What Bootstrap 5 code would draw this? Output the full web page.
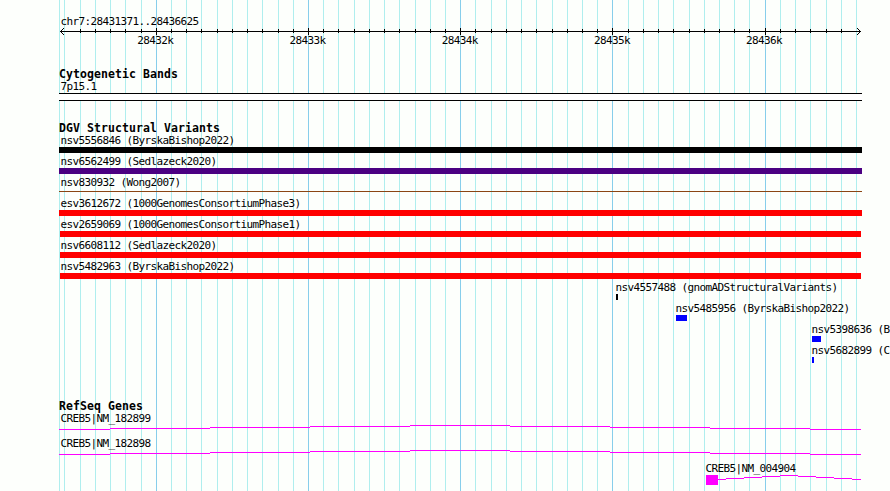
<!DOCTYPE html>
<html lang="en">
<head>
  <meta charset="UTF-8">
  <meta name="viewport" content="width=device-width, initial-scale=1.0">
  <title>chr7:28431371..28436625</title>
  <link href="https://cdn.jsdelivr.net/npm/bootstrap@5.3.2/dist/css/bootstrap.min.css" rel="stylesheet">
  <style>
    body {
      background-color: #fdfffc;
      color: #000;
      font-family: "DejaVu Sans Mono", "Liberation Mono", monospace;
      font-size: 11px;
      letter-spacing: -0.622px;
      line-height: 13px;
    }
    .browser-panel {
      width: 890px;
      height: 491px;
    }
    .grid-lines {
      z-index: -1;
    }
    .panel-title {
      font-size: 11.5px;
      font-weight: bold;
      letter-spacing: 0.077px;
      line-height: 12px;
      margin: 0;
      padding-left: 59px;
    }
    .region-name {
      padding: 15px 0 0 60.4px;
    }
    .ruler {
      height: 8px;
      margin-top: -1px;
    }
    /* each 1000 bp step is 152.24px wide */
    .ruler-labels {
      gap: 116.2px;
      height: 13px;
      margin-top: -1px;
      padding-left: 137.3px;
    }
    .cyto-panel {
      padding-top: 21px;
    }
    .cyto-band {
      background-color: #fff;
      border: solid #000;
      border-width: 1px 0;
      height: 8px;
      margin: 0 28px 0 59px;
    }
    .dgv-panel {
      padding-top: 21px;
    }
    .variant {
      height: 21px;
      padding-left: 60px;
    }
    .variant span {
      padding-left: 0.4px;
    }
    .variant-bar {
      flex: none;
      height: 6px;
      width: 801px;
    }
    .wide-bar {
      margin-left: -1px;
      width: 803px;
    }
    .bar-black { background-color: #000; }
    .bar-indigo { background-color: #4b0082; }
    .bar-red { background-color: #f00; }
    .bar-blue { background-color: #00f; }
    .bar-brown {
      background-color: #8b4513;
      height: 1px;
      margin-top: 2px;
    }
    .small-variant {
      padding-left: 0;
    }
    .small-variant .variant-bar {
      margin-left: 1px;
    }
    .refseq-panel {
      padding-top: 35px;
    }
    .gene {
      height: 25px;
    }
    .gene-name {
      padding-left: 60.4px;
    }
    .gene-name-right {
      padding-left: 705.4px;
    }
    .gene svg {
      flex: none;
      margin-top: -1px;
    }
  </style>
</head>
<body>
  <main class="browser-panel position-relative overflow-hidden text-nowrap">
    <svg class="grid-lines position-absolute top-0 start-0" id="gridLines" width="890" height="491" shape-rendering="crispEdges"></svg>

    <header>
      <div class="region-name">chr7:28431371..28436625</div>
      <svg class="ruler d-block" id="ruler" width="890" height="8" viewBox="0 27 890 8" shape-rendering="crispEdges">
        <path d="M60 31.5H861" stroke="#000"/>
        <path d="M60 31h1v1h-1zM61 30h1v1h-1zM62 29h1v1h-1zM63 28h1v1h-1zM61 32h1v1h-1zM62 33h1v1h-1zM63 34h1v1h-1z"/>
        <path d="M860 31h1v1h-1zM859 30h1v1h-1zM858 29h1v1h-1zM857 28h1v1h-1zM859 32h1v1h-1zM858 33h1v1h-1zM857 34h1v1h-1z"/>
      </svg>
      <div class="ruler-labels d-flex">
        <span>28432k</span>
        <span>28433k</span>
        <span>28434k</span>
        <span>28435k</span>
        <span>28436k</span>
      </div>
    </header>

    <section class="cyto-panel">
      <h2 class="panel-title">Cytogenetic Bands</h2>
      <div class="gene-name">7p15.1</div>
      <div class="cyto-band"></div>
    </section>

    <section class="dgv-panel">
      <h2 class="panel-title">DGV Structural Variants</h2>
      <div id="variants"></div>
    </section>

    <section class="refseq-panel">
      <h2 class="panel-title">RefSeq Genes</h2>
      <div class="gene d-flex flex-column">
        <span class="gene-name">CREB5|NM_182899</span>
        <svg width="890" height="13" viewBox="0 424 890 13" shape-rendering="crispEdges" fill="none" stroke="#f0f">
          <path d="M59 429.5h51m0-1h100m0-1h100m0-1h100m0-1h100m0 1h100m0 1h100m0 1h100m0 1h51"/>
        </svg>
      </div>
      <div class="gene d-flex flex-column">
        <span class="gene-name">CREB5|NM_182898</span>
        <svg width="890" height="13" viewBox="0 424 890 13" shape-rendering="crispEdges" fill="none" stroke="#f0f">
          <path d="M59 429.5h51m0-1h100m0-1h100m0-1h100m0-1h100m0 1h100m0 1h100m0 1h100m0 1h51"/>
        </svg>
      </div>
      <div class="gene d-flex flex-column">
        <span class="gene-name-right">CREB5|NM_004904</span>
        <svg width="890" height="13" viewBox="0 474 890 13" shape-rendering="crispEdges" fill="none" stroke="#f0f">
          <rect x="706" y="475" width="12" height="10" fill="#f0f" stroke="none"/>
          <path d="M718 479.5h8m0-1h18m0-1h18m0-1h18m0-1h18m0 1h18m0 1h18m0 1h18m0 1h9"/>
        </svg>
      </div>
    </section>
  </main>

  <script src="https://cdn.jsdelivr.net/npm/bootstrap@5.3.2/dist/js/bootstrap.bundle.min.js"></script>
  <script>
    const REGION_START = 28431371;
    const REGION_END = 28436625;
    const SCALE = 800 / (REGION_END - REGION_START + 1);

    function rect(x, y, width, height, color) {
      return `<rect x="${x}" y="${y}" width="${width}" height="${height}" fill="${color}"/>`;
    }

    // vertical lines every 100 bp, darker every 1000 bp
    let lines = rect(59, 0, 1, 491, '#afeeee');
    let ticks = '';
    for (let pos = 28431400; pos < REGION_END; pos += 100) {
      const x = Math.round(60 + (pos - REGION_START) * SCALE);
      const major = pos % 1000 === 0;
      if (x > 860) break;
      lines += rect(x, 0, 1, 491, major ? '#87ceeb' : '#afeeee');
      if (x > 64 && x < 856) {
        ticks += major ? rect(x, 28, 1, 7, '#000') : rect(x, 29, 1, 4, '#000');
      }
    }
    document.getElementById('gridLines').innerHTML = lines;
    document.getElementById('ruler').insertAdjacentHTML('beforeend', ticks);

    const variants = [
      { name: 'nsv5556846 (ByrskaBishop2022)', bar: 'bar-black wide-bar' },
      { name: 'nsv6562499 (Sedlazeck2020)', bar: 'bar-indigo wide-bar' },
      { name: 'nsv830932 (Wong2007)', bar: 'bar-brown wide-bar' },
      { name: 'esv3612672 (1000GenomesConsortiumPhase3)', bar: 'bar-red wide-bar' },
      { name: 'esv2659069 (1000GenomesConsortiumPhase1)', bar: 'bar-red' },
      { name: 'nsv6608112 (Sedlazeck2020)', bar: 'bar-red' },
      { name: 'nsv5482963 (ByrskaBishop2022)', bar: 'bar-red' },
      { name: 'nsv4557488 (gnomADStructuralVariants)', bar: 'bar-black', left: 615, width: 2 },
      { name: 'nsv5485956 (ByrskaBishop2022)', bar: 'bar-blue', left: 675, width: 11 },
      { name: 'nsv5398636 (B', bar: 'bar-blue', left: 811, width: 9 },
      { name: 'nsv5682899 (C', bar: 'bar-blue', left: 811, width: 2 }
    ];

    document.getElementById('variants').innerHTML = variants.map(v => {
      if (!v.left) {
        return `<div class="variant d-flex flex-column"><span>${v.name}</span><div class="variant-bar ${v.bar}"></div></div>`;
      }
      return `<div class="variant small-variant d-flex flex-column" style="margin-left: ${v.left}px">
        <span>${v.name}</span><div class="variant-bar ${v.bar}" style="width: ${v.width}px"></div></div>`;
    }).join('');
  </script>
</body>
</html>
